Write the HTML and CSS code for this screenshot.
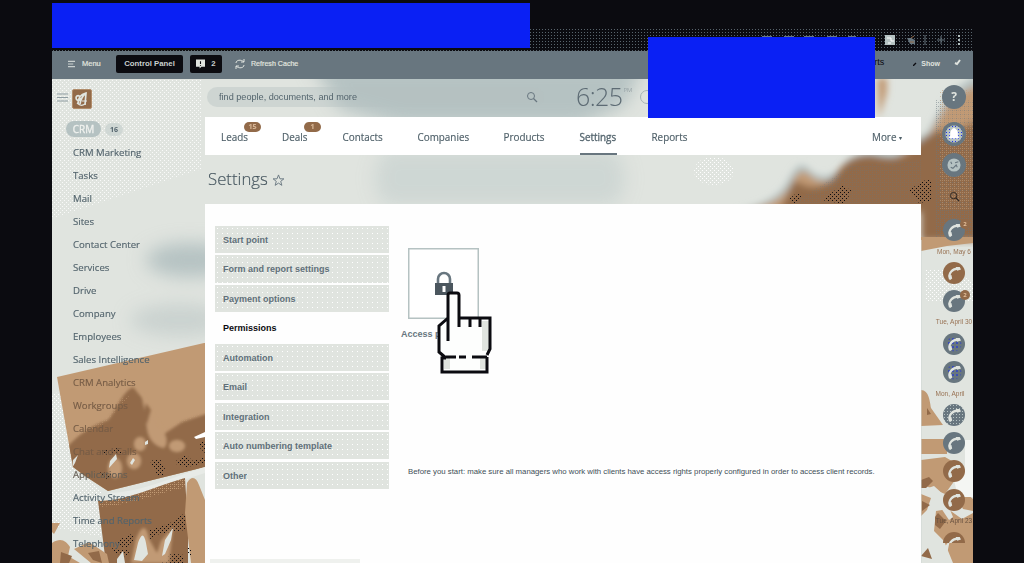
FILE: index.html
```
<!DOCTYPE html>
<html lang="en">
<head>
<meta charset="utf-8">
<title>CRM Settings</title>
<link rel="stylesheet" href="styles.css">
</head>
<body>
<svg class="defs" width="0" height="0" aria-hidden="true">
  <symbol id="phone" viewBox="0 0 22 22"><path d="M7 17C4.9 11.5 9.3 6 16.3 6.7" fill="none" stroke="#e0e4df" stroke-width="2.2"/><path d="M12.7 5l4-.1 1.3 2.7-3.8 1.2zM5.4 13.5l3-.6.8 3.5-2.4 1.8z" fill="#e0e4df"/></symbol>
  <symbol id="lens" viewBox="0 0 12 12"><circle cx="5" cy="5" r="3.5" fill="none" stroke="currentColor"/><path d="M7.5 7.5L11 11" stroke="currentColor" stroke-width="1.3"/></symbol>
</svg>
<div class="screen">
  <header class="chrome">
    <svg class="extensions" viewBox="0 0 240 24">
      <path d="M4 11h9M29 9h10M51 9h10M71 9h10M94 9h10M115 9h8" stroke="#68767f" stroke-width="2"/>
      <path d="M152 7h10v10h-10z" fill="#b5c2c2"/><path d="M154 10h4v3h3M155 15h3" stroke="#fff" fill="none"/>
      <path d="M174 10h4l4 2v4h-5z" fill="#68767f"/><path d="M178 10l3-2M177 14h4" stroke="#926a49"/>
      <path d="M192 7v10M204 12h8M208 8v8" stroke="#68767f"/>
      <path d="M226 7v2M226 11v2M226 15v2" stroke="#b5c2c2" stroke-width="2"/>
    </svg>
  </header>
  <nav class="toolbar">
    <svg class="burger" viewBox="0 0 8 8"><path d="M0 1h8M0 4h6M0 7h8" stroke="#c9d0cf" stroke-width="1.2"/></svg>
    <span class="menu-label">Menu</span>
    <button class="panel">Control Panel</button>
    <button class="alerts"><svg viewBox="0 0 10 10"><path d="M0 0h10v8H6L4 10V8H0z" fill="#e0e4df"/><path d="M5 2v3M5 6v1" stroke="#0b0b10" stroke-width="1.2"/></svg><span>2</span></button>
    <svg class="refresh" viewBox="0 0 10 10"><path d="M1 4c0-3 5-4 8-1M9 0v3H6M9 6c0 3-5 4-8 1M1 10V7h3" fill="none" stroke="#e0e4df"/></svg>
    <span class="cache">Refresh Cache</span>
    <span class="imports">orts</span>
    <svg class="tick" viewBox="0 0 4 4"><path d="M0 4L3 1" stroke="#0b0b10" stroke-width="1.3"/></svg>
    <span class="show">Show</span>
    <svg class="pin" viewBox="0 0 7 7"><path d="M1 4l2 1 3-4" fill="none" stroke="#e0e4df" stroke-width="2"/></svg>
  </nav>
  <div class="workspace">
    <svg class="scenery" viewBox="52 79 921 484" preserveAspectRatio="none" aria-hidden="true">
      <defs>
        <filter id="soft" x="-30%" y="-30%" width="160%" height="160%"><feGaussianBlur stdDeviation="9"/></filter>
        <filter id="edge" x="-20%" y="-20%" width="140%" height="140%"><feGaussianBlur stdDeviation="3.5"/></filter>
        <filter id="shade" x="-20%" y="-20%" width="140%" height="140%"><feGaussianBlur stdDeviation="1.6"/></filter>
        <pattern id="speck" width="4" height="4" patternUnits="userSpaceOnUse"><path d="M0 0h1v1H0zM2 2h1v1H2z" fill="#fff"/></pattern>
        <pattern id="grain" width="4" height="4" patternUnits="userSpaceOnUse"><path d="M0 0h1v1H0zM2 2h1v1H2zM0 2h1v1H0z" fill="#68767f"/></pattern>
        <pattern id="amber" width="4" height="4" patternUnits="userSpaceOnUse"><path d="M0 0h1v1H0zM2 2h1v1H2zM2 0h1v1H2z" fill="#c19a74"/></pattern>
        <pattern id="ink" width="4" height="4" patternUnits="userSpaceOnUse"><path d="M0 0h1v1H0zM2 2h1v1H2z" fill="#0b0b10"/></pattern>
        <clipPath id="print"><path d="M57 377l147-34h1v124l-97 24-23-15-12-9z"/></clipPath>
      </defs>
      <path d="M52 79h921v484H52z" fill="#e0e4df"/>
      <path d="M52 79h150v90l-60 20-90 30z" fill="url(#speck)" opacity=".8"/>
      <g filter="url(#soft)" fill="#b5c2c2">
        <path d="M310 62h335l-20 43-45 20H400l-60-16z"/>
        <path d="M385 150h230q20 30 0 55H385q-20-25 0-55z" opacity=".4"/>
        <ellipse cx="190" cy="260" rx="44" ry="17"/>
        <ellipse cx="180" cy="320" rx="50" ry="16" opacity=".5"/>
      </g>
      <ellipse cx="714" cy="171" rx="20" ry="14" fill="url(#speck)"/>
      <g filter="url(#edge)">
        <path d="M735 212c22-7 43-12 53-32 7-14 14-20 22-10 10 10 26 6 33-5 9-13 28-16 48-12l36-20 22-40 30-20v167h-52v-28z" fill="#b5c2c2"/>
        <path d="M745 212c22-7 38-12 46-28 7-14 12-16 20-8 12 10 28 4 34-7 8-13 28-15 48-10l34-20 24-40 30-16v157h-60v-28z" fill="#c19a74"/>
        <path d="M775 212c14-8 14-34 23-30 12 8 28 6 38-8 8-12 18-19 36-19 22 6 35 2 43-10 10-6 22-20 34-13l32-12v121h-60v-29z" fill="#926a49"/>
        <path d="M877 78h10v14l-8 26z" fill="#c19a74"/>
      </g>
      <path d="M830 180l20-14 71-6v44H790z" fill="url(#grain)" opacity=".3"/>
      <path d="M935 100h38v138h-38z" fill="url(#grain)" opacity=".5"/>
      <path d="M940 90h33v120h-33z" fill="url(#amber)" opacity=".6"/>
      <path d="M789 199l9-7 4 6-9 6zM822 200l20-15 10 6-8 13zM909 190l14-9 8-2v22l-12 2z" fill="url(#ink)"/>
      <!-- printed photographs lying in the background -->
      <path d="M52 395l8-4 10 60 8 20 24 21v45l-50-10z" fill="url(#speck)"/>
      <path d="M57 377l147-34h1v124l-97 24-23-15-12-9z" fill="#c19a74"/>
      <g clip-path="url(#print)">
        <g filter="url(#shade)">
          <path d="M68 446c14-15 28-22 40-26 8-8 12-26 25-33l9 11 6 24 16 12 18-12 30-10v80l-110 20-40-35z" fill="#926a49"/>
          <path d="M142 394c4 10 10 22 18 32 6 8 9 16 4 22-10-2-16-10-17-20z" fill="#c19a74"/>
          <ellipse cx="177" cy="446" rx="8" ry="6" fill="#c19a74"/><ellipse cx="140" cy="444" rx="6" ry="7" fill="#c19a74"/>
          <ellipse cx="115" cy="468" rx="7" ry="10" fill="#c19a74"/><ellipse cx="134" cy="461" rx="7" ry="8" fill="#c19a74"/>
          <path d="M146 403l5 7-4 14-4-8z" fill="#926a49"/>
        </g>
        <path d="M70 430l40-28 20-6-26 28-36 16zM150 404l55-13v22l-24 10-18 6z" fill="url(#amber)" opacity=".5"/>
        <path d="M110 461l6-7 1 5-8 9zM130 463l3-5 2 2-3 5zM145 442l3-2v4l-3 1zM72 468l1-8 5-5-3 8z" fill="#e0e4df"/>
        <path d="M194 437l11-5v5l-9 2z" fill="#fff"/>
        <path d="M98 451l20-3 4 5-16 2zM150 461l10-2 5 10-2 7h-5zM176 461l9-7 8 7 12-4v6l-18 4-10-2zM199 443l6-2v12l-5-5zM100 472l12 2-6 5z" fill="url(#ink)"/>
      </g>
      <path d="M107 493c32 0 63-15 98-26v6c-34 10-59 24-91 27z" fill="#e8ebe7"/>
      <path d="M98 501c30 0 57-15 87-23l3 50v36h-82z" fill="#926a49"/>
      <path d="M98 501c30 0 57-15 87-23l1 9c-30 7-56 18-86 20z" fill="url(#amber)"/>
      <path d="M187 483c4-7 9-7 12 2l6 15v63h-14l-6-50z" fill="#c19a74"/>
      <path d="M150 530l20-7 15-10v17l-26 4-10 6zM118 540l16-7v10l-9 5-7-3zM112 548l18 2-3 7-12-4zM160 552l24 3v8h-24zM187 547l4 2v8l-4-3z" fill="url(#ink)"/>
      <g filter="url(#shade)"><path d="M131 563l5-24q9-22 13 0l8 14 4-12 12-14-4 36z" fill="#c19a74"/></g>
      <path d="M134 560l4-17q5-15 8 0l2 11-6 7zM162 556l3-16 8-12-2 12-6 14zM117 559l6-8 2 12h-8z" fill="#e0e4df"/>
      <path d="M52 523h8l-6 11-2-2zM52 543c9-6 14-2 18 4l-2 9 12 7H52zM74 549l15-7 18 12 2 9H91z" fill="#c19a74"/>
      <path d="M61 552l11 4-3 7h-9zM88 553l11-2 3 12-9-3z" fill="#926a49"/>
      <!-- the same photographs beside the right panel -->
      <path d="M921 247h52v148h-52z" fill="#e0e4df"/>
      <path d="M921 237h52v6l-26 3-26 5z" fill="#c19a74"/>
      <path d="M925 269h20l28 12v21h-48z" fill="url(#speck)"/>
      <path d="M921 390c8 0 9 12 10 18l12 17-22 1zM921 439h26v15h-26zM921 460l24-3 12 7-2 16-10 14-24-10zM921 494l10 4-4 12-6 6zM936 511l12-2 14 10 11-6v50h-20l-9-22-10-10zM957 498l7 5-3-6 5-4 7 6v12l-10-2z" fill="#c19a74"/>
      <path d="M921 480l8-3 4 4-7 7h-5zM922 501l8 4-8 6zM935 517l3-4 8 8-6 8-5-4zM921 556l7-8 4 11zM927 408l4 6-4 1z" fill="#926a49"/>
      <path d="M925 489l9-3 10 9 9 22-4 3-8-12zM950 540l-18 23h13z" fill="#e0e4df"/>
      <path d="M965 440h8v57h-15l-4-17 11-10z" fill="#f4f6f3"/>
      <path d="M920.5 240v323" stroke="#cdd6d3" stroke-width="2"/>
    </svg>
    <aside class="sidebar">
      <div class="brand">
        <svg viewBox="0 0 12 9"><path d="M0 1h11M0 4.5h11M0 8h11" stroke="#8f9da2"/></svg>
        <svg class="logo" viewBox="0 0 20 20"><rect x=".5" y=".5" width="19" height="19" rx="1.5" fill="#926a49" stroke="#b18d6b"/><g fill="none" stroke="#e0e4df"><path d="M8 9C7 4 2 8 5 11q2 2 4-2M6 15C6 9 9 5 14 4l-1 12M8 15q1-7 6-11" stroke-width="1.7"/><path d="M10 12h5M5 14q4 4 8 1" stroke-width="1.2"/></g></svg>
      </div>
      <div class="current"><span class="pill">CRM</span><span class="count">16</span></div>
      <ul class="links">
        <li>CRM Marketing</li><li>Tasks</li><li>Mail</li><li>Sites</li><li>Contact Center</li><li>Services</li><li>Drive</li><li>Company</li><li>Employees</li><li>Sales Intelligence</li>
        <li class="faded">CRM Analytics</li><li class="faded">Workgroups</li><li class="faded">Calendar</li><li class="faded">Chat and Calls</li><li class="mixed">Applications</li><li>Activity Stream</li><li>Time and Reports</li><li>Telephony</li>
      </ul>
    </aside>
    <main class="main">
      <div class="searchrow">
        <div class="search"><span>find people, documents, and more</span><svg><use href="#lens"/></svg></div>
        <div class="clock">6:25<sup>PM</sup></div><div class="ring"></div>
      </div>
      <nav class="tabs">
        <a class="leads">Leads<b>15</b></a><a class="deals">Deals<b>1</b></a><a class="contacts">Contacts</a><a class="companies">Companies</a><a class="products">Products</a><a class="active">Settings</a><a class="reports">Reports</a><a class="more">More <i>▾</i></a>
      </nav>
      <h1>Settings <svg viewBox="0 0 14 14"><path d="M7 1l1.6 4.2h4.2L9.4 7.9l1.2 4.3L7 9.8l-3.6 2.4 1.2-4.3L1.2 5.2h4.2z" fill="none" stroke="#68767f"/></svg></h1>
      <section class="content">
        <ul class="options">
          <li>Start point</li><li>Form and report settings</li><li>Payment options</li><li class="selected">Permissions</li><li>Automation</li><li>Email</li><li>Integration</li><li>Auto numbering template</li><li>Other</li>
        </ul>
        <div class="detail">
          <div class="tile"><svg viewBox="0 0 20 26"><path d="M4 13V8a6 6 0 0 1 12 0v5" fill="none" stroke="#68767f" stroke-width="2.6"/><rect x="1" y="12" width="18" height="12" fill="#4b565e"/><path d="M10 15v6" stroke="#fff" stroke-width="3"/></svg></div>
          <div class="access">Access permissions</div>
          <p>Before you start: make sure all managers who work with clients have access rights properly configured in order to access client records.</p>
          <svg class="hand" viewBox="0 0 58 86">
            <path d="M12 4h12v24h30v31l-3 6v17H6V66l-4-8V34l10-6z" fill="#fdfefd"/>
            <path d="M46 31h7v30h-7zM8 68h6v11H8zM44 68h6v11h-6z" fill="#e0e4df"/>
            <g fill="none" stroke="#0b0b10" stroke-width="3"><path d="M12 51V5q0-2 2-2h7q2 0 2 2v32M24 28h30v31l-3 6M34 28v9M44 28v9M12 28l-9 8v26l7 6M10 68H6v14h45V67M10 67h10M23 67h7M36 67h15"/></g>
          </svg>
        </div>
        <div class="strip"></div>
      </section>
    </main>
    <aside class="rail">
      <span class="dot help">?</span>
      <span class="dot bell"><svg viewBox="0 0 22 22"><path d="M6 15l2-3V8q3-5 6 0v4l2 3z" fill="#fff"/></svg></span>
      <span class="dot chat"><svg viewBox="0 0 22 22"><circle cx="11" cy="11" r="6" fill="#b5c2c2"/><path d="M8 8l1 2M12 9l3-1M8 13l2 1 3-3 1 2" fill="none" stroke="#68767f"/></svg></span>
      <svg class="find"><use href="#lens"/></svg>
      <span class="dot"><svg><use href="#phone"/></svg><b>2</b></span>
      <small>Mon, May 6</small>
      <span class="dot brown"><svg><use href="#phone"/></svg></span>
      <span class="dot"><svg><use href="#phone"/></svg><b>2</b></span>
      <small>Tue, April 30</small>
      <span class="dot blue"><svg><use href="#phone"/></svg></span>
      <span class="dot blue"><svg><use href="#phone"/></svg></span>
      <small class="left">Mon, April</small>
      <span class="dot light"><svg><use href="#phone"/></svg></span>
      <span class="dot"><svg><use href="#phone"/></svg></span>
      <span class="dot brown"><svg><use href="#phone"/></svg></span>
      <span class="dot brown"><svg><use href="#phone"/></svg></span>
      <small class="dark">Tue, April 23</small>
      <span class="dot brown cut"><svg><use href="#phone"/></svg></span>
    </aside>
  </div>
  <div class="block first"></div>
  <div class="block second"></div>
</div>
</body>
</html>
```

FILE: styles.css
```
* { box-sizing: border-box; }
body { margin: 0; width: 1024px; height: 563px; overflow: hidden; background: #0b0b10; color: #53646d; font-family: "Open Sans", sans-serif; }
ul { list-style: none; margin: 0; padding: 0; }
svg { display: block; flex: none; }
.defs { position: absolute; }
.screen { position: relative; width: 921px; height: 563px; margin-left: 52px; padding-top: 28px; display: flex; flex-direction: column; }
.chrome { height: 23px; flex: none; display: flex; justify-content: flex-end; background: radial-gradient(circle, #58646c 0 .6px, transparent .7px) 0 0 / 3px 3px #0b0b10; }
.extensions { width: 240px; height: 24px; }
.toolbar { height: 28px; flex: none; display: flex; align-items: center; padding-left: 16px; padding-bottom: 3px; background: #68767f; color: #e0e4df; font: 7.5px "Liberation Sans", sans-serif; }
.burger { width: 7px; height: 8px; margin-right: 7px; }
.menu-label { width: 34px; -webkit-text-stroke: .2px; }
.toolbar button { height: 18px; padding: 0; border: 0; border-radius: 2px; background: #0b0b10; color: #c9d0cf; font: bold 7.8px "Liberation Sans", sans-serif; }
.panel { width: 67px; }
.toolbar .alerts { width: 32px; margin: 0 13px 0 7px; display: flex; align-items: center; justify-content: center; gap: 6px; }
.alerts svg { width: 9px; height: 10px; }
.refresh { width: 10px; height: 10px; margin-right: 6px; }
.cache { font-size: 7.1px; -webkit-text-stroke: .2px; }
.imports { margin-left: auto; margin-bottom: 3px; color: #0b0b10; font-size: 9px; }
.tick { width: 4px; height: 4px; margin: 0 4px 0 29px; }
.show { font-weight: bold; font-size: 7px; }
.pin { width: 7px; height: 7px; margin: 0 12px 2px 14px; }
.workspace { position: relative; flex: 1; min-height: 0; display: flex; overflow: hidden; }
.scenery { position: absolute; inset: 0; width: 921px; height: 484px; }
.sidebar, .main, .rail { position: relative; }
.sidebar { width: 153px; padding: 10px 0 0 5px; }
.brand { display: flex; align-items: center; gap: 3px; height: 19px; }
.brand svg { width: 12px; height: 9px; margin-bottom: 3px; }
.brand .logo { width: 20px; height: 20px; margin: 0; }
.current { display: flex; align-items: center; gap: 4px; margin: 13px 0 5px 9px; height: 16px; }
.pill { width: 35px; height: 16px; border-radius: 8px; background: #b5c2c2; color: #f0f2ef; font-size: 10px; line-height: 16px; text-align: center; -webkit-text-stroke: .3px; }
.count { width: 18px; height: 13px; border-radius: 7px; background: #cfd7d4; font-size: 7px; font-weight: bold; line-height: 13px; text-align: center; }
.links { padding-left: 16px; font-size: 9.6px; -webkit-text-stroke: .15px; }
.links li { height: 23px; line-height: 22.6px; white-space: nowrap; }
.links .faded { color: #765c46; }
.links .mixed { color: #665f55; }
.main { width: 716px; display: flex; flex-direction: column; }
.searchrow { height: 38px; flex: none; display: flex; align-items: flex-start; padding: 8px 0 0 2px; }
.search { width: 337px; height: 20px; border-radius: 10px; padding: 0 6px 0 12px; display: flex; align-items: center; justify-content: space-between; background: rgba(181,194,194,.42); font: 9.15px "Liberation Sans", sans-serif; }
.search svg { width: 12px; height: 12px; color: #68767f; }
.clock { display: flex; align-items: flex-start; margin-left: 32px; height: 20px; font: 300 25px/18px "Open Sans", sans-serif; color: #5d6b74; letter-spacing: -.6px; }
.clock sup { margin-left: 1px; font-size: 6px; line-height: 7px; letter-spacing: 0; opacity: .7; }
.ring { width: 14px; height: 14px; margin: 3px 0 0 8px; border: 1px solid #a5b2b4; border-radius: 50%; }
.tabs { height: 38px; flex: none; display: flex; padding-left: 16px; background: #fff; font-size: 9.9px; line-height: 41px; color: #4f6069; -webkit-text-stroke: .15px; }
.tabs a { position: relative; height: 38px; white-space: nowrap; }
.leads { width: 61px; } .deals { width: 60.5px; } .contacts { width: 75px; } .companies { width: 86px; } .products { width: 76px; }
.tabs .active { width: 37px; margin-right: 35px; color: #53646d; border-bottom: 2px solid #68767f; -webkit-text-stroke: .3px; }
.tabs .more { margin-left: auto; padding-right: 19px; }
.more i { font-size: 6px; font-style: normal; vertical-align: 1px; }
.tabs b { position: absolute; left: 23px; top: 5px; width: 17px; height: 10px; border-radius: 5px; background: #926a49; color: #d6b595; font-size: 7px; line-height: 10px; text-align: center; }
.deals b { left: 22px; }
h1 { display: flex; align-items: center; gap: 5px; height: 49px; flex: none; margin: 0; padding: 0 0 2px 3px; font: 300 16.8px/47px "Open Sans", sans-serif; color: #46565f; -webkit-text-stroke: .15px; }
h1 svg { width: 13px; height: 13px; margin: 3px 0 0 -1px; }
.content { position: relative; flex: 1; display: flex; padding: 22px 0 0 9.5px; background: #fefefe; }
.options { width: 174px; flex: none; display: flex; flex-direction: column; gap: 2.2px; font: bold 9px "Liberation Sans", sans-serif; color: #60707a; }
.options li { height: 27.25px; flex: none; padding-left: 8.5px; line-height: 28.5px; background: radial-gradient(circle, #fff 0 .5px, transparent .6px) 0 0 / 5px 5px #e0e4df; }
.options .selected { background: none; color: #0b0b10; }
.detail { position: relative; flex: 1; padding: 22px 0 0 19.5px; font: 8px "Liberation Sans", sans-serif; }
.tile { width: 71px; height: 71px; border: 1px solid #b5c2c2; box-shadow: inset 0 0 0 .5px #b5c2c2; display: flex; align-items: flex-start; justify-content: center; padding-top: 22px; background: #fff; }
.tile svg { width: 20px; height: 26px; }
.access { margin: 9px 0 0 -7px; white-space: nowrap; font: bold 9px/12px "Liberation Sans", sans-serif; color: #68767f; }
.detail p { margin: 126px 0 0; font-size: 7.8px; line-height: 11px; letter-spacing: -.01px; white-space: nowrap; color: #414f57; }
.hand { position: absolute; left: 47px; top: 64px; width: 58px; height: 86px; }
.strip { position: absolute; left: 5px; bottom: 0; width: 150px; height: 4px; background: #eff1ee; }
.rail { width: 52px; padding-left: 14px; display: grid; grid-template-columns: 38px; grid-template-rows: 36px 38px 24px 38px 30px 13px 30px 26px 16px 27px 30px 14px 28px 28px 28px 30px 12px 32px; justify-items: center; align-items: center; }
.dot { position: relative; width: 22px; height: 22px; border-radius: 50%; background: #68767f; }
.dot svg { width: 22px; height: 22px; }
.help, .bell, .chat { width: 24px; height: 24px; }
.bell svg, .chat svg { width: 24px; height: 24px; }
.help { color: #e0e4df; font-weight: bold; font-size: 12px; line-height: 24px; text-align: center; }
.bell { background: radial-gradient(circle, #fff 0 3px, transparent 5px), radial-gradient(circle, transparent 0 8px, #68767f 9px), radial-gradient(circle, #1e32ef 0 .6px, transparent .8px) 0 0 / 3px 3px, #b5c2c2; }
.brown { background: #926a49; }
.blue { background: radial-gradient(circle, transparent 0 6px, #68767f 8px), radial-gradient(circle, #0a20f4 0 .6px, transparent .8px) 0 0 / 4px 4px #68767f; }
.light { background: radial-gradient(circle, #b5c2c2 0 .6px, transparent .8px) 0 0 / 3px 3px #68767f; }
.dot b { position: absolute; right: -5px; top: 0; width: 10px; height: 10px; border-radius: 50%; background: #926a49; color: #e2bd98; font-size: 6px; line-height: 10px; text-align: center; }
.find { width: 11px; height: 11px; color: #2a2522; }
.rail small { font: 6.5px/10px "Liberation Sans", sans-serif; white-space: nowrap; color: #987253; }
.rail .left { margin-right: 8px; }
.rail .dark { color: #68513f; }
.cut { height: 11px; overflow: hidden; border-radius: 11px 11px 0 0; align-self: start; margin-top: 5px; }
.block { position: absolute; background: #0a20f4; }
.first { left: 0; top: 3px; width: 478px; height: 45px; }
.second { left: 596px; top: 37px; width: 227px; height: 81px; }
```
